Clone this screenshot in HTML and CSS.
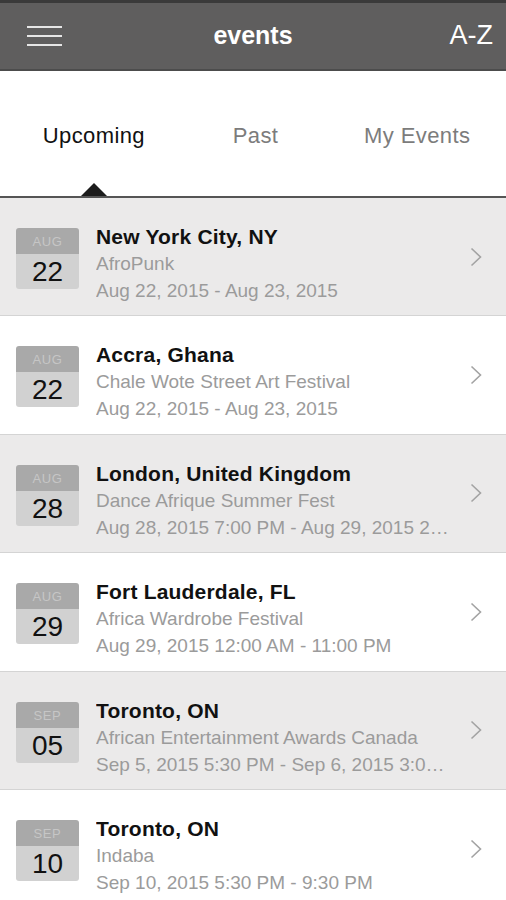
FILE: index.html
```html
<!DOCTYPE html>
<html lang="en">
<head>
  <meta charset="UTF-8">
  <title>events</title>
  <link rel="stylesheet" href="styles.css">
</head>
<body>
  <header class="navbar">
    <button class="menu" aria-label="Menu"><span></span><span></span><span></span></button>
    <h1 class="title">events</h1>
    <span class="sort">A-Z</span>
  </header>

  <nav class="tabs">
    <a class="tab active">Upcoming</a>
    <a class="tab">Past</a>
    <a class="tab">My Events</a>
  </nav>

  <ul class="events">
    <li class="event shaded">
      <div class="cal"><div class="month">AUG</div><div class="day">22</div></div>
      <div class="info">
        <div class="city">New York City, NY</div>
        <div class="name">AfroPunk</div>
        <div class="when">Aug 22, 2015 - Aug 23, 2015</div>
      </div>
      <svg class="chevron" viewBox="0 0 12 20"><path d="M1.5 1.5 L10.5 10 L1.5 18.5" /></svg>
    </li>
    <li class="event">
      <div class="cal"><div class="month">AUG</div><div class="day">22</div></div>
      <div class="info">
        <div class="city">Accra, Ghana</div>
        <div class="name">Chale Wote Street Art Festival</div>
        <div class="when">Aug 22, 2015 - Aug 23, 2015</div>
      </div>
      <svg class="chevron" viewBox="0 0 12 20"><path d="M1.5 1.5 L10.5 10 L1.5 18.5" /></svg>
    </li>
    <li class="event shaded">
      <div class="cal"><div class="month">AUG</div><div class="day">28</div></div>
      <div class="info">
        <div class="city">London, United Kingdom</div>
        <div class="name">Dance Afrique Summer Fest</div>
        <div class="when">Aug 28, 2015 7:00 PM - Aug 29, 2015 2:00 AM</div>
      </div>
      <svg class="chevron" viewBox="0 0 12 20"><path d="M1.5 1.5 L10.5 10 L1.5 18.5" /></svg>
    </li>
    <li class="event">
      <div class="cal"><div class="month">AUG</div><div class="day">29</div></div>
      <div class="info">
        <div class="city">Fort Lauderdale, FL</div>
        <div class="name">Africa Wardrobe Festival</div>
        <div class="when">Aug 29, 2015 12:00 AM - 11:00 PM</div>
      </div>
      <svg class="chevron" viewBox="0 0 12 20"><path d="M1.5 1.5 L10.5 10 L1.5 18.5" /></svg>
    </li>
    <li class="event shaded">
      <div class="cal"><div class="month">SEP</div><div class="day">05</div></div>
      <div class="info">
        <div class="city">Toronto, ON</div>
        <div class="name">African Entertainment Awards Canada</div>
        <div class="when">Sep 5, 2015 5:30 PM - Sep 6, 2015 3:00 AM</div>
      </div>
      <svg class="chevron" viewBox="0 0 12 20"><path d="M1.5 1.5 L10.5 10 L1.5 18.5" /></svg>
    </li>
    <li class="event">
      <div class="cal"><div class="month">SEP</div><div class="day">10</div></div>
      <div class="info">
        <div class="city">Toronto, ON</div>
        <div class="name">Indaba</div>
        <div class="when">Sep 10, 2015 5:30 PM - 9:30 PM</div>
      </div>
      <svg class="chevron" viewBox="0 0 12 20"><path d="M1.5 1.5 L10.5 10 L1.5 18.5" /></svg>
    </li>
  </ul>
</body>
</html>
```

FILE: styles.css
```css
body { margin: 0; background: #fff; font-family: "Liberation Sans", Arial, sans-serif; color: #111; overflow: hidden; }

/* top bar */
.navbar { box-sizing: border-box; height: 71px; background: #5f5e5e; border-top: 3px solid #3a3a3a; border-bottom: 2px solid #4c4c4c; display: grid; grid-template-columns: 1fr auto 1fr; align-items: center; }
.menu { justify-self: start; margin-left: 27px; padding: 0; width: 35px; background: none; border: none; display: flex; flex-direction: column; gap: 7px; }
.menu span { display: block; height: 2px; background: #e6e6e6; }
.title { margin: 0; color: #fff; font-size: 25px; font-weight: bold; padding-bottom: 2px; }
.sort { justify-self: end; margin-right: 13px; color: #fff; font-size: 27px; padding-bottom: 2px; }

/* tabs */
.tabs { box-sizing: border-box; height: 127px; border-bottom: 2px solid #555; display: grid; grid-template-columns: repeat(3, 1fr); padding: 0 8px 0 13px; }
.tab { position: relative; display: flex; align-items: center; justify-content: center; padding-top: 4px; font-size: 22px; letter-spacing: 0.4px; color: #7c7c7c; }
.tab.active { color: #111; }
.tab.active::after { content: ""; position: absolute; bottom: 0; left: 50%; transform: translateX(-50%); border-left: 13.5px solid transparent; border-right: 13.5px solid transparent; border-bottom: 13px solid #1c1c1c; }

/* event list */
.events { list-style: none; margin: 0; padding: 0; }
.event { box-sizing: border-box; height: 118.4px; display: flex; align-items: flex-start; padding-left: 16px; border-bottom: 1px solid #d4d4d4; background: #fff; }
.event.shaded { background: #ebeaea; }

.cal { width: 63px; margin-top: 30px; border-radius: 3px; overflow: hidden; text-align: center; flex: none; }
.cal .month { height: 26px; line-height: 27px; background: #a9a9a9; color: #c6c6c6; font-size: 13px; letter-spacing: 0.6px; }
.cal .day { height: 35px; line-height: 35px; background: #d1d1d1; color: #111; font-size: 28px; }

.info { flex: 1; min-width: 0; margin-left: 17px; padding-top: 25px; }
.info div { line-height: 27px; white-space: nowrap; overflow: hidden; text-overflow: ellipsis; }
.city { font-size: 21px; font-weight: bold; letter-spacing: 0.2px; color: #111; }
.name, .when { font-size: 19px; color: #9b9b9b; }

.chevron { flex: none; align-self: center; width: 12px; height: 20px; margin: 0 24px 0 18px; fill: none; stroke: #a3a3a3; stroke-width: 1.6; }
```
